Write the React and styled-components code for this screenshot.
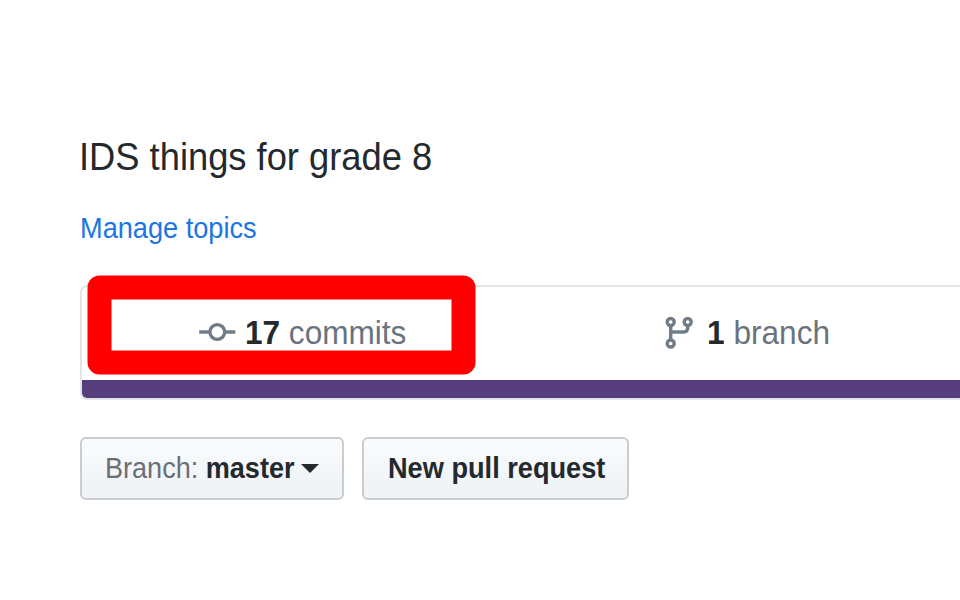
import React from "react";
import styled, { createGlobalStyle } from "styled-components";

const Global = createGlobalStyle`
  * { box-sizing: border-box; }
  body { margin: 0; background: #fff; overflow: hidden; font-family: "Liberation Sans", Arial, sans-serif; }
`;

const Page = styled.main`
  width: 960px;
  height: 600px;
  overflow: hidden;
  padding: 133px 0 0 80px;
  color: #24292e;
`;

const Label = styled.span`
  display: inline-block;
  flex: none;
  white-space: pre;
  transform: scaleX(${(p) => p.$fit || 1});
  transform-origin: left center;
`;

const Description = styled.h1`
  margin: 0 0 0 -1px;
  height: 48px;
  font-size: 38.5px;
  line-height: 48px;
  font-weight: 400;
`;

const Topics = styled.a`
  display: block;
  margin: 29px 0 0 -0.5px;
  height: 36px;
  font-size: 28.6px;
  line-height: 36px;
  color: #1b76e2;
`;

const Summary = styled.section`
  position: relative;
  width: 1868px;
  height: 115px;
  margin-top: 39px;
  border: 2px solid #e1e4e8;
  border-radius: 7px;
`;

const Stats = styled.ul`
  display: flex;
  height: 93px;
  margin: 0;
  padding: 0 0 1px;
  list-style: none;
`;

const Stat = styled.li`
  display: flex;
  align-items: center;
  gap: ${(p) => p.$gap}px;
  width: 467px;
  padding-left: 116px;
  font-size: 33.4px;
  color: #6a737d;
  strong { color: #24292e; }
`;

const Icon = styled.svg`
  flex: none;
  margin-bottom: 2px;
  fill: none;
  stroke: #727c86;
  stroke-width: 3.4;
`;

const LanguageBar = styled.div`
  height: 18px;
  background: #563d7c;
  border-radius: 0 0 5px 5px;
`;

const Highlight = styled.div`
  position: absolute;
  left: 6px;
  top: -12px;
  width: 388px;
  height: 99px;
  border: 24px solid #f00;
  border-radius: 12px;
  transform: translate(-0.5px, 0.4px);
`;

const Actions = styled.div`
  display: flex;
  gap: 18px;
  margin-top: 37px;
`;

const Button = styled.button`
  display: flex;
  align-items: center;
  width: ${(p) => p.$width}px;
  height: 63px;
  padding: 0 0 0 ${(p) => p.$inset}px;
  border: 2px solid #c9cdd1;
  border-radius: 6px;
  background: linear-gradient(#fafbfc, #eff3f6 90%);
  font: 700 28.6px "Liberation Sans", Arial, sans-serif;
  color: #24292e;
  i { font-style: normal; font-weight: 400; color: #6a6f76; }
`;

const Caret = styled.span`
  border: 9px solid transparent;
  border-top-color: #24292e;
  border-bottom: 0;
  margin-left: -3.5px;
`;

export default function App() {
  return (
    <>
      <Global />
      <Page>
        <Description><Label $fit={0.943}>IDS things for grade 8</Label></Description>
        <Topics><Label $fit={0.95}>Manage topics</Label></Topics>
        <Summary>
          <Stats>
            <Stat $gap={9}>
              <Icon width="38" height="32" viewBox="0 0 38 32">
                <circle cx="19.3" cy="16" r="7.4" />
                <path d="M1.2 16H12M26.7 16H37.4" />
              </Icon>
              <Label $fit={0.945}><strong>17</strong> commits</Label>
            </Stat>
            <Stat $gap={12}>
              <Icon width="30" height="34" viewBox="0 0 30 34">
                <circle cx="5.7" cy="7" r="3.5" />
                <circle cx="22.7" cy="7" r="3.5" />
                <circle cx="5.7" cy="28.5" r="3.5" />
                <path d="M5.7 11V25M22.7 11V13Q22.7 17 18.7 17H5.7" />
              </Icon>
              <Label $fit={0.947}><strong>1</strong> branch</Label>
            </Stat>
          </Stats>
          <LanguageBar />
          <Highlight />
        </Summary>
        <Actions>
          <Button $width={264} $inset={22.5}><Label $fit={0.946}><i>Branch:</i> master</Label><Caret /></Button>
          <Button $width={267} $inset={23.5}><Label $fit={0.95}>New pull request</Label></Button>
        </Actions>
      </Page>
    </>
  );
}
